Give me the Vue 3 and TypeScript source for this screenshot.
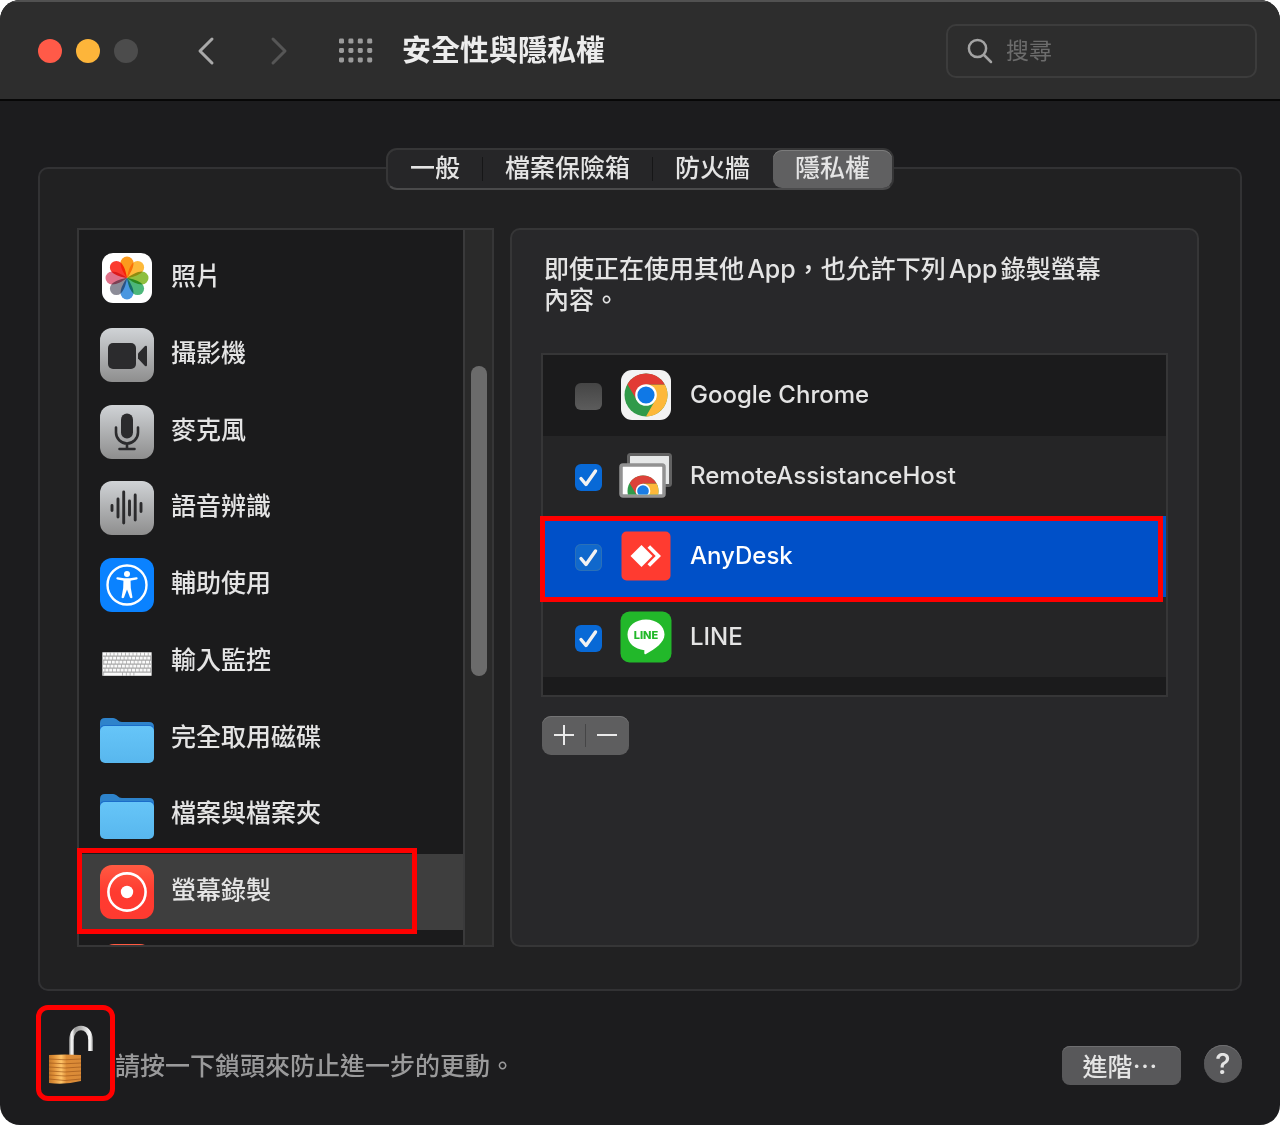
<script setup lang="ts">
import { ref } from 'vue'

interface Category {
  id: string
  label: string
}

interface AppEntry {
  id: string
  name: string
  allowed: boolean
}

const tabs = ['一般', '檔案保險箱', '防火牆', '隱私權']
const activeTab = ref('隱私權')

const categories: Category[] = [
  { id: 'photos', label: '照片' },
  { id: 'camera', label: '攝影機' },
  { id: 'mic', label: '麥克風' },
  { id: 'speech', label: '語音辨識' },
  { id: 'access', label: '輔助使用' },
  { id: 'keyboard', label: '輸入監控' },
  { id: 'disk', label: '完全取用磁碟' },
  { id: 'files', label: '檔案與檔案夾' },
  { id: 'screen', label: '螢幕錄製' },
  { id: 'next', label: '' },
]
const activeCategory = ref('screen')

const apps = ref<AppEntry[]>([
  { id: 'chrome', name: 'Google Chrome', allowed: false },
  { id: 'remote', name: 'RemoteAssistanceHost', allowed: true },
  { id: 'anydesk', name: 'AnyDesk', allowed: true },
  { id: 'line', name: 'LINE', allowed: true },
])
const selectedApp = ref('anydesk')

const petals = ['#fb9a1d', '#fdb93a', '#8fbf3f', '#4cb77a', '#4a97e0', '#8c8c98', '#e0728a', '#fb3b30']
const keyRows = [0, 1, 2, 3, 4, 5]
</script>

<template>
  <div class="window">
    <header class="titlebar">
      <div class="lights">
        <button class="light red" aria-label="關閉"></button>
        <button class="light yellow" aria-label="縮到最小"></button>
        <button class="light grey" aria-label="縮放" disabled></button>
      </div>
      <button class="nav back" aria-label="返回">
        <svg width="20" height="30" viewBox="0 0 20 30"><path d="M16 3 4 15 16 27" /></svg>
      </button>
      <button class="nav forward" aria-label="前進">
        <svg width="20" height="30" viewBox="0 0 20 30"><path d="M4 3 16 15 4 27" /></svg>
      </button>
      <button class="nav grid" aria-label="顯示全部">
        <svg width="36" height="26" viewBox="0 0 36 26">
          <template v-for="y in 3" :key="y">
            <rect v-for="x in 4" :key="x" :x="(x - 1) * 9.4 + 1" :y="(y - 1) * 9.4 + 0.6" width="5" height="5" rx="1.4" />
          </template>
        </svg>
      </button>
      <h1>安全性與隱私權</h1>
      <label class="search">
        <svg width="28" height="28" viewBox="0 0 28 28"><circle cx="11.5" cy="11.5" r="8.6" /><path d="m18 18 7 7" /></svg>
        <input type="search" placeholder="搜尋" aria-label="搜尋" />
      </label>
    </header>

    <main>
      <div class="tabs" role="tablist">
        <button
          v-for="tab in tabs"
          :key="tab"
          role="tab"
          class="tab"
          :class="{ active: tab === activeTab }"
          :aria-selected="tab === activeTab"
          @click="activeTab = tab"
        >{{ tab }}</button>
      </div>

      <section class="panel">
        <nav class="sidebar">
          <div class="viewport">
            <ul class="categories">
              <li
                v-for="cat in categories"
                :key="cat.id"
                :class="{ selected: cat.id === activeCategory }"
                @click="activeCategory = cat.id"
              >
                <svg class="icon" width="56" height="56" viewBox="0 0 56 56">
                  <defs>
                    <linearGradient :id="'silver-' + cat.id" x1="0" y1="0" x2="0" y2="1">
                      <stop offset="0" stop-color="#d0d3d6" /><stop offset="1" stop-color="#8e8e8e" />
                    </linearGradient>
                    <linearGradient :id="'red-' + cat.id" x1="0" y1="0" x2="0" y2="1">
                      <stop offset="0" stop-color="#ff5a42" /><stop offset="0.5" stop-color="#ff3b30" /><stop offset="1" stop-color="#ff3a30" />
                    </linearGradient>
                    <linearGradient :id="'folder-' + cat.id" x1="0" y1="0" x2="0" y2="1">
                      <stop offset="0" stop-color="#66c5f8" /><stop offset="1" stop-color="#58b7ee" />
                    </linearGradient>
                  </defs>
                  <g v-if="cat.id === 'photos'" class="petals">
                    <rect x="3" y="3" width="50" height="50" rx="11" fill="#fff" />
                    <path
                      v-for="(color, i) in petals"
                      :key="color"
                      d="M28 28C25 24 21.500 18 21.500 13a6.500 6.500 0 0 1 13 0C34.500 18 31 24 28 28Z"
                      :fill="color"
                      :transform="`rotate(${i * 45} 28 28)`"
                    />
                  </g>
                  <g v-else-if="cat.id === 'camera'">
                    <rect x="1" y="1" width="54" height="54" rx="12" :fill="`url(#silver-${cat.id})`" />
                    <rect x="9" y="16" width="28" height="26" rx="5" fill="#2b2b2d" />
                    <path d="M39 26.500 46 19q2-1 2 1v18q0 2-2 1l-7-7.500Z" fill="#2b2b2d" />
                  </g>
                  <g v-else-if="cat.id === 'mic'">
                    <rect x="1" y="1" width="54" height="54" rx="12" :fill="`url(#silver-${cat.id})`" />
                    <rect x="22" y="9.500" width="12" height="25" rx="6" fill="#2b2b2d" />
                    <path d="M17 23.500v5a11 11 0 0 0 22 0v-5M28 39.500v5M20.500 45h15" fill="none" stroke="#2b2b2d" stroke-width="2.600" stroke-linecap="round" />
                  </g>
                  <g v-else-if="cat.id === 'speech'">
                    <rect x="1" y="1" width="54" height="54" rx="12" :fill="`url(#silver-${cat.id})`" />
                    <path d="M13 25.500v5M19 19v18M24.700 12v31M30.500 21v14M36.200 15v25M42 23.500v8" stroke="#2b2b2d" stroke-width="2.900" stroke-linecap="round" />
                  </g>
                  <g v-else-if="cat.id === 'access'">
                    <rect x="1" y="1" width="54" height="54" rx="12" fill="#0a82ff" />
                    <circle cx="28" cy="28" r="19.500" fill="none" stroke="#fff" stroke-width="2.400" />
                    <circle cx="28" cy="17" r="3" fill="#fff" />
                    <path d="M18.500 21.300 25 22.500h6l6.500-1.200" stroke="#fff" stroke-width="2.300" fill="none" stroke-linecap="round" stroke-linejoin="round" />
                    <path d="M24.500 22h7l.3 9 1.700 9.500q-1.500 1.500-2.500 0L28 32.500l-3 8q-1 1.500-2.500 0L24.200 31Z" fill="#fff" />
                  </g>
                  <g v-else-if="cat.id === 'keyboard'">
                    <rect x="3" y="18" width="50" height="24" rx="1" fill="#a8a8a8" />
                    <path v-for="r in keyRows" :key="r" :d="`M4 ${20.200 + r * 4}h48`" stroke="#fafafa" stroke-width="2.800" :stroke-dasharray="r === 5 ? '3 .8 3 .8 18 .8 3 .8' : '3 .8'" :stroke-dashoffset="r * 1.300" />
                  </g>
                  <g v-else-if="cat.id === 'disk' || cat.id === 'files'">
                    <path d="M1 12q0-5 5-5h8c4 0 5 4 9 4h27q5 0 5 5v8H1Z" fill="#2e83cb" />
                    <path d="M1 18q0-4 5-4h44q5 0 5 4v5H1Z" fill="#1b6dca" />
                    <rect x="1" y="15" width="54" height="37" rx="5" :fill="`url(#folder-${cat.id})`" />
                  </g>
                  <g v-else-if="cat.id === 'screen'">
                    <rect x="1" y="1" width="54" height="54" rx="12" :fill="`url(#red-${cat.id})`" />
                    <circle cx="28" cy="28" r="18.600" fill="none" stroke="#fff" stroke-width="2.600" />
                    <circle cx="28" cy="28" r="6.200" fill="#fff" />
                  </g>
                  <rect v-else x="3" y="3" width="50" height="50" rx="12" :fill="`url(#red-${cat.id})`" />
                </svg>
                <span>{{ cat.label }}</span>
                <i v-if="cat.id === activeCategory" class="callout"></i>
              </li>
            </ul>
          </div>
          <div class="track"><div class="thumb"></div></div>
        </nav>

        <div class="detail">
          <p>即使正在使用其他App，也允許下列App錄製螢幕內容。</p>
          <div class="app-box">
            <ul class="apps">
              <li
                v-for="app in apps"
                :key="app.id"
                :class="{ selected: app.id === selectedApp }"
                @click="selectedApp = app.id"
              >
                <span class="check">
                  <input :id="'allow-' + app.id" v-model="app.allowed" type="checkbox" />
                  <svg v-if="app.allowed" width="27" height="27" viewBox="0 0 27 27"><path d="m6 14.500 5 6L20.500 7" /></svg>
                </span>
                <svg class="app-icon" width="54" height="54" viewBox="0 0 54 54">
                  <g v-if="app.id === 'chrome'">
                    <rect x="2" y="2" width="50" height="50" rx="11" fill="#f3f3f3" />
                    <circle cx="27" cy="27" r="21.500" fill="#319a4a" />
                    <path d="M27 16.500h18.800A21.500 21.500 0 0 1 27 48.500l9.200-16.200Z" fill="#fdb83a" />
                    <path d="M27 16.500h18.800A21.500 21.500 0 0 0 8.400 16.200L17.900 32.300Z" fill="#e23b34" />
                    <circle cx="27" cy="27" r="10.800" fill="#fff" />
                    <circle cx="27" cy="27" r="8.600" fill="#0f78e6" />
                  </g>
                  <g v-else-if="app.id === 'remote'">
                    <rect x="9.500" y="5.500" width="42" height="31" rx="2" fill="#e6e8e8" stroke="#626262" stroke-width="3" />
                    <rect x="2" y="16" width="43" height="31" rx="2" fill="#fff" stroke="#929292" stroke-width="3.500" />
                    <clipPath id="screen-clip"><rect x="4" y="18" width="39" height="27.500" /></clipPath>
                    <g clip-path="url(#screen-clip)">
                      <circle cx="24" cy="42" r="15.500" fill="#319a4a" />
                      <path d="M24 34.500h13.600A15.500 15.500 0 0 1 24 57.500l6.500-11.700Z" fill="#fdb83a" />
                      <path d="M24 34.500h13.600A15.500 15.500 0 0 0 10.600 34.200l6.900 11.600Z" fill="#dc4239" />
                      <circle cx="24" cy="42" r="7.300" fill="#fff" />
                      <circle cx="24" cy="42" r="5.800" fill="#1a7ce4" />
                    </g>
                  </g>
                  <g v-else-if="app.id === 'anydesk'">
                    <rect x="2.500" y="2.500" width="49" height="49" rx="5" fill="#ff3b30" />
                    <path d="M22.500 16 33.500 27l-11 11-11-11Z" fill="#fff" />
                    <path d="m28.500 18.800 2.600-2.600L42 27 31.100 37.800l-2.600-2.600L36.700 27Z" fill="#fff" />
                  </g>
                  <g v-else>
                    <rect x="1.500" y="1.500" width="51" height="51" rx="9" fill="#22b82a" />
                    <path d="M27 9.500c10.500 0 18.500 6.500 18.500 15 0 8-9.500 14.500-18.500 19.500-1.800.9-1.900-.3-1.600-3.800C15.500 39.300 8.500 33 8.500 24.500c0-8.500 8-15 18.500-15Z" fill="#fff" />
                    <text x="27" y="28.500" text-anchor="middle" class="line-mark">LINE</text>
                  </g>
                </svg>
                <label :for="'allow-' + app.id">{{ app.name }}</label>
                <i v-if="app.id === selectedApp" class="callout"></i>
              </li>
            </ul>
          </div>
          <div class="stepper">
            <button aria-label="加入"><svg width="22" height="22" viewBox="0 0 22 22"><path d="M1 11h20M11 1v20" /></svg></button>
            <button aria-label="移除"><svg width="22" height="22" viewBox="0 0 22 22"><path d="M1 11h20" /></svg></button>
          </div>
        </div>
      </section>
    </main>

    <footer>
      <button class="lock" aria-label="鎖頭">
        <svg width="46" height="60" viewBox="0 0 46 60">
          <defs>
            <linearGradient id="brass" x1="0" y1="0" x2="1" y2="0">
              <stop offset="0" stop-color="#c47a2a" /><stop offset="0.150" stop-color="#e09038" />
              <stop offset="0.380" stop-color="#ffc468" /><stop offset="0.550" stop-color="#dd8c36" />
              <stop offset="1" stop-color="#d98a38" />
            </linearGradient>
            <linearGradient id="steel" gradientUnits="userSpaceOnUse" x1="21" y1="0" x2="45" y2="0">
              <stop offset="0" stop-color="#8f8f8f" /><stop offset="0.120" stop-color="#ffffff" />
              <stop offset="0.250" stop-color="#9a9a9a" /><stop offset="0.500" stop-color="#b4b4b4" />
              <stop offset="0.880" stop-color="#ffffff" /><stop offset="1" stop-color="#9a9a9a" />
            </linearGradient>
          </defs>
          <path d="M23.500 30V15C23.500-1 42.500-1 42.500 15v11" fill="none" stroke="url(#steel)" stroke-width="4.600" />
          <path d="M1 30q16-1 32 0v26q-16 4-32 2Z" fill="url(#brass)" />
          <path d="M1 34q16 1.500 32 0M1 38q16 1.500 32 0M1 42q16 2 32 0M1 46q16 2 32 0M1 50q16 2 32 0M1 54q16 3 32 0" fill="none" stroke="#9c5418" stroke-width="1" opacity="0.650" />
        </svg>
      </button>
      <span class="hint">請按一下鎖頭來防止進一步的更動。</span>
      <button class="advanced">進階…</button>
      <button class="help" aria-label="說明">?</button>
    </footer>
  </div>
</template>

<style>
body {
  margin: 0;
  background: #fff;
}
</style>

<style scoped>
.window {
  box-sizing: border-box;
  min-height: 100vh;
  display: flex;
  flex-direction: column;
  background: #1c1c1e;
  border-radius: 20px;
  overflow: hidden;
  color: #e4e4e4;
  font: 500 25px/38px Inter, "Noto Sans CJK TC", sans-serif;
}

button {
  margin: 0;
  padding: 0;
  border: 0;
  background: none;
  color: inherit;
  font: inherit;
}

svg {
  display: block;
  flex: none;
}

ul {
  margin: 0;
  padding: 0;
  list-style: none;
}

.titlebar {
  box-sizing: border-box;
  height: 101px;
  padding: 0 23px 0 38px;
  display: flex;
  align-items: center;
  background: #2d2d2d;
  border-top: 2px solid #515151;
  border-bottom: 2px solid #070707;
}

.lights {
  display: flex;
  gap: 14px;
  margin-right: 58px;
}

.light {
  width: 24px;
  height: 24px;
  border-radius: 50%;
}

.red { background: #ff5a48; }
.yellow { background: #fdb53a; }
.grey { background: #4c4c4c; }

.nav path {
  fill: none;
  stroke: #a9a9a9;
  stroke-width: 3;
  stroke-linecap: round;
  stroke-linejoin: round;
}

.forward {
  margin-left: 53px;
}

.forward path {
  stroke: #565656;
}

.grid {
  margin-left: 49px;
}

.grid rect {
  fill: #9b9b9b;
}

h1 {
  margin: 0 0 0 28px;
  font-size: 29px;
  line-height: 40px;
  font-weight: 700;
  color: #ececec;
  white-space: nowrap;
}

.search {
  box-sizing: border-box;
  width: 311px;
  height: 54px;
  margin-left: auto;
  padding: 0 18px;
  display: flex;
  align-items: center;
  gap: 12px;
  border: 2px solid #3c3c3c;
  border-radius: 10px;
}

.search svg {
  fill: none;
  stroke: #a4a4a4;
  stroke-width: 2.5;
  stroke-linecap: round;
}

.search input {
  flex: 1;
  min-width: 0;
  padding: 0;
  border: 0;
  outline: 0;
  background: none;
  color: #e4e4e4;
  font-family: inherit;
  font-size: 23px;
  line-height: 34px;
}

.search input::placeholder {
  color: #6c6c6c;
  opacity: 1;
}

main {
  flex: 1;
  display: flex;
  flex-direction: column;
  padding: 47px 38px 0;
}

.tabs {
  position: relative;
  align-self: center;
  display: flex;
  gap: 1px;
  margin-bottom: -23px;
  border: 2px solid #363637;
  border-bottom-color: #4a4a4b;
  border-radius: 11px;
  background: #262628;
}

.tab {
  position: relative;
  height: 38px;
  padding: 0 22px 2px;
  white-space: nowrap;
  line-height: 36px;
}

.tab + .tab:not(.active)::before {
  content: "";
  position: absolute;
  left: -1px;
  top: 7px;
  width: 1px;
  height: 24px;
  background: #161617;
}

.tab.active {
  border-radius: 9px;
  background: #606061;
  box-shadow: inset 0 1px #7b7b7b;
}

.panel {
  flex: 1;
  display: flex;
  gap: 16px;
  padding: 59px 41px 42px 37px;
  border: 2px solid #323234;
  border-radius: 10px;
  background: #212122;
}

.sidebar {
  box-sizing: border-box;
  flex: 0 0 417px;
  height: 719px;
  display: flex;
  border: 2px solid #363637;
  background: #1b1b1c;
}

.viewport {
  flex: 1;
  overflow-x: visible;
  overflow-y: clip;
}

.categories {
  height: 767px;
  margin-top: 10px;
  display: grid;
  grid-template-rows: repeat(10, 1fr);
}

.categories li {
  position: relative;
  display: flex;
  align-items: center;
  padding-left: 20px;
  gap: 16px;
}

.categories li span {
  line-height: 34px;
  padding-bottom: 4px;
}

.categories .selected {
  background: #3e3e3e;
}

.petals path {
  mix-blend-mode: multiply;
}

.track {
  box-sizing: border-box;
  width: 29px;
  padding: 136px 5px 0 6px;
  border-left: 2px solid #3a3a3b;
  background: #2a2a2a;
}

.thumb {
  height: 310px;
  border-radius: 8px;
  background: #6b6b6b;
}

.callout {
  position: absolute;
  z-index: 1;
  border: 5px solid #f00;
  pointer-events: none;
}

.categories .callout {
  left: -2px;
  right: 46px;
  top: -6px;
  bottom: -4px;
}

.detail {
  flex: 1;
  min-width: 0;
  padding: 24px 29px;
  border: 2px solid #363637;
  border-radius: 10px;
  background: #28282a;
}

.detail p {
  max-width: 575px;
  margin: 0 0 37px 3px;
  line-height: 31px;
  text-autospace: normal;
}

.app-box {
  padding-bottom: 18px;
  border: 2px solid #363637;
  background: #1b1b1c;
}

.apps {
  height: 322px;
  display: grid;
  grid-template-rows: repeat(4, 1fr);
}

.apps li {
  position: relative;
  display: flex;
  align-items: center;
  padding-left: 32px;
  background: #252526;
}

.apps li:first-child {
  background: #1b1b1c;
}

.apps .selected {
  background: #0050c8;
  color: #fff;
}

.apps label {
  margin-left: 17px;
  font-size: 24px;
}

.check {
  position: relative;
  width: 27px;
  height: 27px;
  margin: 3px 17px 0 0;
}

.check input {
  appearance: none;
  display: block;
  width: 27px;
  height: 27px;
  margin: 0;
  border-radius: 6px;
  background: linear-gradient(#454545, #5c5c5c);
}

.check input:checked {
  background: #0869d6;
}

.selected .check input:checked {
  background: #1068cc;
  box-shadow: inset 0 0 0 1px #2a70b8;
}

.check svg {
  position: absolute;
  inset: 0;
  fill: none;
  stroke: #f2f2f2;
  stroke-width: 3.4;
  stroke-linecap: round;
  stroke-linejoin: round;
  pointer-events: none;
}

.line-mark {
  font: 800 11px Inter, sans-serif;
  fill: #22b82a;
}

.apps .callout {
  left: -3px;
  right: 3px;
  top: 0;
  bottom: -5px;
}

.stepper {
  display: inline-flex;
  margin: 19px 0 0 1px;
  border-radius: 9px;
  background: #5e5e5f;
  box-shadow: inset 0 1px #747475;
}

.stepper button {
  position: relative;
  width: 43px;
  height: 39px;
  padding-bottom: 2px;
  display: grid;
  place-items: center;
}

.stepper button + button {
  width: 44px;
}

.stepper button + button::before {
  content: "";
  position: absolute;
  left: 0;
  top: 8px;
  width: 1px;
  height: 23px;
  background: #454546;
}

.stepper path {
  stroke: #eaeaea;
  stroke-width: 2;
}

footer {
  display: flex;
  align-items: flex-end;
  padding: 14px 38px 24px 36px;
}

.lock {
  box-sizing: border-box;
  width: 79px;
  height: 96px;
  padding: 4px 0 0 7px;
  border: 5px solid #f00;
  border-radius: 12px;
}

.hint {
  margin-bottom: 16px;
  color: #9a9a9b;
}

.advanced {
  margin: 0 23px 16px auto;
  width: 119px;
  height: 39px;
  padding: 0 3px 2px 0;
  border-radius: 8px;
  background: #58585a;
  box-shadow: inset 0 1px #6e6e70;
  font-family: "Noto Sans CJK TC", sans-serif;
  line-height: 32px;
}

.help {
  width: 38px;
  height: 38px;
  margin-bottom: 18px;
  border-radius: 50%;
  background: #58585a;
  box-shadow: inset 0 1px #6e6e70;
  font-size: 29px;
}
</style>
